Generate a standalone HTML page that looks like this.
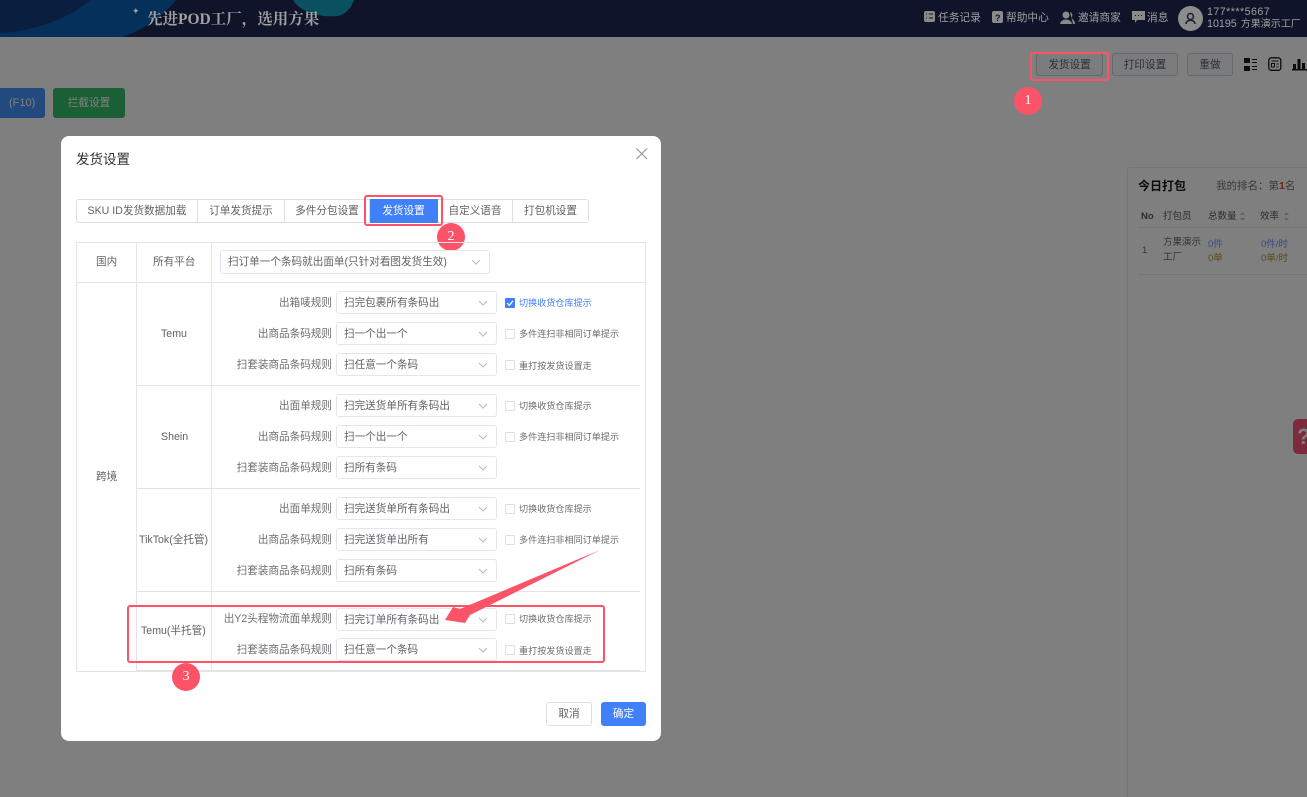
<!DOCTYPE html>
<html lang="zh"><head><meta charset="utf-8"><title>发货设置</title>
<style>
html,body{margin:0;padding:0;width:1307px;height:797px;overflow:hidden;background:#fff}
#root{position:absolute;left:0;top:0;width:1307px;height:797px;overflow:hidden;background:#fff;font-family:"Liberation Sans","Noto Sans CJK SC",sans-serif;font-size:10.6px;color:#606266}
.a{position:absolute;white-space:nowrap;line-height:16px}
.l{position:absolute;background:#e2e4e8}
.sel{position:absolute;left:336px;width:159px;height:21px;border:1px solid #e4e6ee;border-radius:3px;background:#fff;line-height:22px;text-indent:7px;font-size:10.6px;color:#606266;white-space:nowrap}
.sel svg{position:absolute;right:8px;top:8px}
.lab{position:absolute;right:975px;line-height:16px;white-space:nowrap;color:#6a6d72}
.cb{position:absolute;left:505px;width:8px;height:8px;border:1px solid #dcdfe6;border-radius:1px;background:#fff}
.ct{position:absolute;left:519px;font-size:9.1px;line-height:14px;white-space:nowrap;color:#6a6d72}
.tab{position:absolute;top:199px;height:22px;line-height:23px;text-align:center;border:1px solid #dcdfe6;border-left:0;background:#fff;color:#606266;font-size:10.6px}
.red{position:absolute;border:2px solid #fd5368;border-radius:3px;box-sizing:border-box}
.num{position:absolute;width:28px;height:28px;border-radius:50%;background:#fd5368;color:#fff;text-align:center;font:14px/28px "Liberation Serif",serif}
.btn{position:absolute;top:53px;height:23px;line-height:22px;box-sizing:border-box;border:1px solid #ccd4dc;border-radius:3px;text-align:center;color:#5a5e66;font-size:10.6px;background:#f6f8fa}
.hd{position:absolute;top:10px;color:#a0a0a0;font-size:10.7px;line-height:16px;white-space:nowrap}
</style></head><body>
<div id="root">

<!-- page under the mask -->
<div class="btn" style="left:1036px;width:67px">发货设置</div>
<div class="btn" style="left:1112px;width:66px">打印设置</div>
<div class="btn" style="left:1187px;width:46px">重做</div>
<svg width="14" height="14" style="position:absolute;left:1244px;top:58px"><path d="M0 0h6v5H0zM0 8h6v5H0zM8 1h5v1H8zM8 4h5v1H8zM8 8h5v1H8zM8 11h5v1H8z" fill="#181818"/></svg>
<svg width="14" height="15" style="position:absolute;left:1268px;top:57px"><rect x=".8" y=".8" width="12" height="12.500" rx="2.500" fill="none" stroke="#181818" stroke-width="1.300"/><path d="M3.500 4h7M3.500 6.500h3v3.500h-3zM8.500 7h2M8.500 10h2" fill="none" stroke="#181818"/></svg>
<svg width="15" height="14" style="position:absolute;left:1292px;top:57px"><path d="M0 12h15v1.500H0zM1 7h3v5H1zM5.500 2h3v10h-3zM10 6h3v6h-3z" fill="#181818"/></svg>

<div style="position:absolute;left:0;top:88px;width:45px;height:30px;background:#4494ff;border-radius:0 3px 3px 0;color:#fff;line-height:30px;font-size:11px;text-indent:9px">(F10)</div>
<div style="position:absolute;left:53px;top:88px;width:72px;height:30px;background:#36be6c;border-radius:3px;color:#fff;line-height:30px;text-align:center;font-size:10.600px">拦截设置</div>

<div style="position:absolute;left:1127px;top:167px;width:190px;height:650px;box-sizing:border-box;border:1px solid #e8e8e8;border-radius:3px;background:#fff"></div>
<div class="a" style="left:1138px;top:178px;color:#181818;font-weight:bold;font-size:12px">今日打包</div>
<div class="a" style="left:1216px;top:178px;color:#747474;font-size:10.500px">我的排名：第<span style="color:#f43e3e;font-weight:bold">1</span>名</div>
<div class="a" style="left:1141px;top:209px;color:#585858;font-size:9.500px;font-weight:bold">No</div>
<div class="a" style="left:1163px;top:209px;color:#585858;font-size:9.500px">打包员</div>
<div class="a" style="left:1208px;top:209px;color:#585858;font-size:9.500px">总数量</div>
<div class="a" style="left:1260px;top:209px;color:#585858;font-size:9.500px">效率</div>
<svg width="8" height="12" style="position:absolute;left:1239px;top:211px"><path d="M1 4L3.500 1L6 4ZM1 7L3.500 10L6 7Z" fill="#c6c6c6"/></svg>
<svg width="8" height="12" style="position:absolute;left:1283px;top:211px"><path d="M1 4L3.500 1L6 4ZM1 7L3.500 10L6 7Z" fill="#c6c6c6"/></svg>
<div style="position:absolute;left:1138px;top:227px;width:169px;height:1px;background:#e8e8e8"></div>
<div class="a" style="left:1142px;top:243px;color:#666;font-size:9.500px">1</div>
<div class="a" style="left:1163px;top:235px;color:#666;font-size:9.500px">方果演示</div>
<div class="a" style="left:1163px;top:250px;color:#666;font-size:9.500px">工厂</div>
<div class="a" style="left:1208px;top:237px;color:#7694f8;font-size:9.500px">0件</div>
<div class="a" style="left:1208px;top:251px;color:#be9438;font-size:9.500px">0单</div>
<div class="a" style="left:1261px;top:237px;color:#7694f8;font-size:9.500px">0件/时</div>
<div class="a" style="left:1261px;top:251px;color:#be9438;font-size:9.500px">0单/时</div>
<div style="position:absolute;left:1138px;top:274px;width:169px;height:1px;background:#e8e8e8"></div>
<div style="position:absolute;left:1293px;top:419px;width:20px;height:35px;border-radius:5px;background:#fa5478;color:#fff;font:bold 22px/35px 'Liberation Sans';text-indent:4px">?</div>

<!-- mask -->
<div style="position:absolute;left:0;top:0;width:1307px;height:797px;background:rgba(0,0,0,.5)"></div>

<!-- header -->
<div style="position:absolute;left:0;top:0;width:1307px;height:37px;background:#0f142a;overflow:hidden">
<svg width="400" height="37" style="position:absolute;left:0;top:0"><path d="M0 33C35 31 70 18 90 0H0Z" fill="#0a1f40"/><path d="M0 37H122C145 30 165 14 176 0H90C70 18 35 31 0 33Z" fill="#05305a"/><path d="M293 0C300 12 320 18 338 16C347 14 352 6 354 0Z" fill="#0b5060"/></svg>
</div>
<div class="a" style="left:132px;top:6px;color:#a0a0a0;font-size:9px;line-height:10px">✦</div>
<div class="a" style="left:147px;top:9px;color:#a0a0a0;font:bold 15.500px/22px 'Liberation Serif','Noto Serif CJK SC',serif">先进POD工厂，选用方果</div>

<svg width="14" height="14" style="position:absolute;left:923px;top:10px"><rect x="1" y="1" width="11" height="11" rx="2" fill="#8a8a8a"/><path d="M3 4h1M6 4h4M3 8h1M6 8h4" stroke="#0f142a"/></svg>
<div class="hd" style="left:938px">任务记录</div>
<svg width="14" height="14" style="position:absolute;left:991px;top:10px"><rect x="1" y="1" width="11" height="12" rx="2" fill="#8a8a8a"/><text x="4" y="11" font-size="9" font-weight="bold" font-family="Liberation Sans" fill="#0f142a">?</text></svg>
<div class="hd" style="left:1006px">帮助中心</div>
<svg width="16" height="14" style="position:absolute;left:1060px;top:11px"><circle cx="6" cy="4" r="3.500" fill="#8a8a8a"/><path d="M0 13C1 7 11 7 12 13Z" fill="#8a8a8a"/><path d="M10 1C13 2 13 6 11 7C13 8 15 10 15 13H13" fill="#8a8a8a"/></svg>
<div class="hd" style="left:1078px">邀请商家</div>
<svg width="14" height="14" style="position:absolute;left:1132px;top:10px"><path d="M0 1H13V10H5L3 13V10H0Z" fill="#8a8a8a"/><path d="M3 5.500h1M6 5.500h1M9 5.500h1" stroke="#0f142a"/></svg>
<div class="hd" style="left:1147px">消息</div>
<div style="position:absolute;left:1178px;top:6px;width:25px;height:25px;border-radius:50%;background:#8c8c8c"></div>
<svg width="25" height="25" style="position:absolute;left:1178px;top:6px"><circle cx="12.500" cy="10.500" r="3" fill="none" stroke="#1a1d30" stroke-width="1.500"/><path d="M8 18C8 13 17 13 17 18" fill="none" stroke="#1a1d30" stroke-width="1.500"/></svg>
<div class="a" style="left:1207px;top:6px;color:#a0a0a0;font-size:10.700px;line-height:12px;letter-spacing:.45px">177****5667</div>
<div class="a" style="left:1207px;top:18px;color:#a0a0a0;font-size:10.700px;line-height:12px">10195 <span style="font-size:10px;margin-left:1px">方果演示工厂</span></div>

<div class="red" style="left:1030px;top:52px;width:79px;height:29px"></div>
<div class="num" style="left:1014px;top:87px">1</div>

<!-- dialog -->
<div style="position:absolute;left:61px;top:136px;width:600px;height:605px;background:#fff;border-radius:8px"></div>
<div class="a" style="left:76px;top:152px;color:#303133;font-size:13.500px">发货设置</div>
<svg width="14" height="14" style="position:absolute;left:635px;top:147px"><path d="M1.500 1.500L12 12M12 1.500L1.500 12" stroke="#8f9399" stroke-width="1.100"/></svg>

<!-- tabs -->
<div class="tab" style="left:76px;width:120px;border-left:1px solid #dcdfe6;border-radius:3px 0 0 3px">SKU ID发货数据加载</div>
<div class="tab" style="left:198px;width:86px">订单发货提示</div>
<div class="tab" style="left:285px;width:84px">多件分包设置</div>
<div class="tab" style="left:370px;width:67px;background:#4080f8;border-color:#4080f8;color:#fff">发货设置</div>
<div class="tab" style="left:438px;width:74px">自定义语音</div>
<div class="tab" style="left:513px;width:75px;border-radius:0 3px 3px 0">打包机设置</div>
<div class="red" style="left:364px;top:195px;width:79px;height:31px"></div>
<div class="num" style="left:437px;top:223px">2</div>

<!-- table -->
<div class="l" style="left:76px;top:242px;width:570px;height:1px"></div>
<div class="l" style="left:76px;top:282px;width:570px;height:1px"></div>
<div class="l" style="left:76px;top:242px;width:1px;height:430px"></div>
<div class="l" style="left:645px;top:242px;width:1px;height:430px"></div>
<div class="l" style="left:76px;top:671px;width:570px;height:1px"></div>
<div class="l" style="left:136px;top:242px;width:1px;height:430px"></div>
<div class="l" style="left:211px;top:242px;width:1px;height:430px"></div>
<div class="l" style="left:137px;top:385px;width:503px;height:1px"></div>
<div class="l" style="left:137px;top:488px;width:503px;height:1px"></div>
<div class="l" style="left:137px;top:591px;width:503px;height:1px"></div>
<div class="l" style="left:137px;top:670px;width:503px;height:1px"></div>

<div class="a" style="left:96px;top:254px">国内</div>
<div class="a" style="left:153px;top:254px">所有平台</div>
<div class="a" style="left:96px;top:469px">跨境</div>
<div class="a" style="left:161px;top:326px">Temu</div>
<div class="a" style="left:161px;top:429px">Shein</div>
<div class="a" style="left:139px;top:532px">TikTok(全托管)</div>
<div class="a" style="left:141px;top:623px">Temu(半托管)</div>

<div class="sel" style="left:220px;top:250px;width:268px;height:22px;line-height:23px">扫订单一个条码就出面单(只针对看图发货生效)<svg width="10" height="7"><path d="M1 1L5 5L9 1" fill="none" stroke="#b4b8bf"/></svg></div>

<div class="lab" style="top:295px">出箱唛规则</div><div class="sel" style="top:291px">扫完包裹所有条码出<svg width="10" height="7"><path d="M1 1L5 5L9 1" fill="none" stroke="#b4b8bf"/></svg></div>
<div class="lab" style="top:326px">出商品条码规则</div><div class="sel" style="top:322px">扫一个出一个<svg width="10" height="7"><path d="M1 1L5 5L9 1" fill="none" stroke="#b4b8bf"/></svg></div>
<div class="lab" style="top:357px">扫套装商品条码规则</div><div class="sel" style="top:353px">扫任意一个条码<svg width="10" height="7"><path d="M1 1L5 5L9 1" fill="none" stroke="#b4b8bf"/></svg></div>

<div class="lab" style="top:398px">出面单规则</div><div class="sel" style="top:394px">扫完送货单所有条码出<svg width="10" height="7"><path d="M1 1L5 5L9 1" fill="none" stroke="#b4b8bf"/></svg></div>
<div class="lab" style="top:429px">出商品条码规则</div><div class="sel" style="top:425px">扫一个出一个<svg width="10" height="7"><path d="M1 1L5 5L9 1" fill="none" stroke="#b4b8bf"/></svg></div>
<div class="lab" style="top:460px">扫套装商品条码规则</div><div class="sel" style="top:456px">扫所有条码<svg width="10" height="7"><path d="M1 1L5 5L9 1" fill="none" stroke="#b4b8bf"/></svg></div>

<div class="lab" style="top:501px">出面单规则</div><div class="sel" style="top:497px">扫完送货单所有条码出<svg width="10" height="7"><path d="M1 1L5 5L9 1" fill="none" stroke="#b4b8bf"/></svg></div>
<div class="lab" style="top:532px">出商品条码规则</div><div class="sel" style="top:528px">扫完送货单出所有<svg width="10" height="7"><path d="M1 1L5 5L9 1" fill="none" stroke="#b4b8bf"/></svg></div>
<div class="lab" style="top:563px">扫套装商品条码规则</div><div class="sel" style="top:559px">扫所有条码<svg width="10" height="7"><path d="M1 1L5 5L9 1" fill="none" stroke="#b4b8bf"/></svg></div>

<div class="lab" style="top:611px">出Y2头程物流面单规则</div><div class="sel" style="top:608px">扫完订单所有条码出<svg width="10" height="7"><path d="M1 1L5 5L9 1" fill="none" stroke="#b4b8bf"/></svg></div>
<div class="lab" style="top:642px">扫套装商品条码规则</div><div class="sel" style="top:638px">扫任意一个条码<svg width="10" height="7"><path d="M1 1L5 5L9 1" fill="none" stroke="#b4b8bf"/></svg></div>

<div class="cb" style="top:298px;background:#4080f8;border-color:#4080f8"></div>
<svg width="10" height="10" style="position:absolute;left:505px;top:298px"><path d="M2 5L4.300 7.300L8 2.800" fill="none" stroke="#fff" stroke-width="1.200"/></svg>
<div class="ct" style="top:296px;color:#4080f8">切换收货仓库提示</div>
<div class="cb" style="top:329px"></div><div class="ct" style="top:327px">多件连扫非相同订单提示</div>
<div class="cb" style="top:360px"></div><div class="ct" style="top:359px">重打按发货设置走</div>
<div class="cb" style="top:401px"></div><div class="ct" style="top:399px">切换收货仓库提示</div>
<div class="cb" style="top:432px"></div><div class="ct" style="top:430px">多件连扫非相同订单提示</div>
<div class="cb" style="top:504px"></div><div class="ct" style="top:502px">切换收货仓库提示</div>
<div class="cb" style="top:535px"></div><div class="ct" style="top:533px">多件连扫非相同订单提示</div>
<div class="cb" style="top:614px"></div><div class="ct" style="top:612px">切换收货仓库提示</div>
<div class="cb" style="top:645px"></div><div class="ct" style="top:644px">重打按发货设置走</div>

<div class="red" style="left:127px;top:605px;width:478px;height:58px"></div>
<div class="num" style="left:172px;top:663px">3</div>
<svg width="170" height="90" style="position:absolute;left:440px;top:545px"><path d="M160 5L30 70L25 78L5 75L13 62L20 64Z" fill="#fd5368"/></svg>

<!-- footer -->
<div style="position:absolute;left:546px;top:702px;width:46px;height:24px;box-sizing:border-box;border:1px solid #dcdfe6;border-radius:3px;text-align:center;line-height:22px;color:#606266;background:#fff">取消</div>
<div style="position:absolute;left:601px;top:702px;width:45px;height:24px;background:#4080f8;border-radius:3px;text-align:center;line-height:24px;color:#fff">确定</div>
</div>
</body></html>
